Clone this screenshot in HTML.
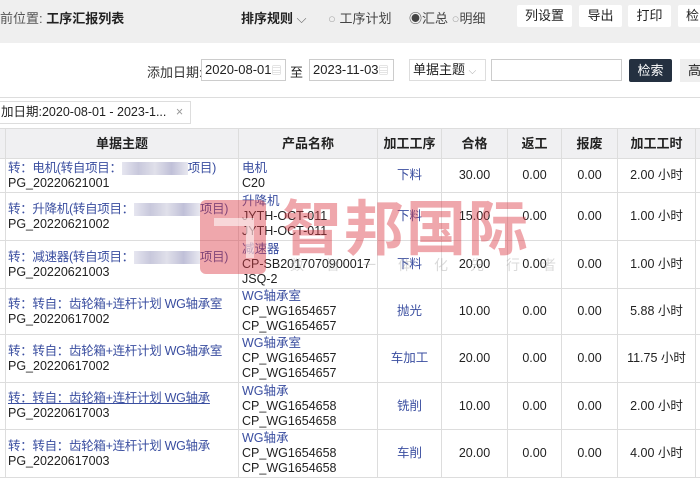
<!DOCTYPE html><html><head><meta charset="utf-8"><style>
*{margin:0;padding:0;box-sizing:border-box}
body{width:700px;height:479px;overflow:hidden;background:#fff;font-family:"Liberation Sans","Noto Sans CJK SC",sans-serif;font-size:13px;color:#222;position:relative}
.a{position:absolute;white-space:nowrap}
.top{position:absolute;left:0;top:0;width:700px;height:43px;background:#efefef}
.btn{position:absolute;top:5px;height:22px;background:#fff;border-radius:2px;font-size:13px;line-height:22px;text-align:center}
.inp{position:absolute;height:22px;border:1px solid #ccc;background:#fff;font-size:13px;line-height:20px;padding-left:3px}
table{position:absolute;left:-2px;top:128px;width:717px;border-collapse:collapse;table-layout:fixed}
td,th{border:1px solid #ddd;font-size:12.5px;line-height:15px;vertical-align:middle;white-space:nowrap;overflow:hidden}
th{background:#f0f0f2;font-weight:bold;height:30px;font-size:13px}
td.c{text-align:center}
.b{color:#3a4ea0}
.z{letter-spacing:-0.3px}
.blur{display:inline-block;width:66px;height:13px;background:linear-gradient(90deg,#e6e6f0,#c8c8dc,#e0e0ea,#c0c0d8,#e8e8f0);vertical-align:middle}
</style></head><body>
<div class="top"></div>
<div class="a" style="left:0;top:8px;font-size:13px;color:#555">前位置: <b style="color:#222">工序汇报列表</b></div>
<div class="a" style="left:241px;top:8px;font-weight:bold">排序规则 <span style="font-weight:normal;color:#666">⌵</span></div>
<div class="a" style="left:328px;top:8px;color:#444"><span style="color:#aaa">○</span> 工序计划</div>
<div class="a" style="left:409px;top:8px;color:#444"><span>◉</span>汇总 <span style="color:#aaa">○</span>明细</div>
<div class="btn" style="left:517px;width:55px">列设置</div>
<div class="btn" style="left:579px;width:43px">导出</div>
<div class="btn" style="left:628px;width:43px">打印</div>
<div class="btn" style="left:678px;width:30px;text-align:left;padding-left:8px">检</div>
<div class="a" style="left:147px;top:62px;color:#333">添加日期:</div>
<div class="inp" style="left:201px;top:59px;width:85px">2020-08-01<span style="color:#bbb;font-size:10px">▤</span></div>
<div class="a" style="left:290px;top:62px">至</div>
<div class="inp" style="left:309px;top:59px;width:85px">2023-11-03<span style="color:#bbb;font-size:10px">▤</span></div>
<div class="inp" style="left:409px;top:59px;width:77px;border-color:#ddd">单据主题 <span style="color:#aaa;font-size:10px">⌵</span></div>
<div class="inp" style="left:491px;top:59px;width:131px"></div>
<div class="a" style="left:629px;top:59px;width:43px;height:23px;background:#243040;color:#fff;border-radius:2px;text-align:center;line-height:23px">检索</div>
<div class="a" style="left:680px;top:59px;width:30px;height:23px;background:#eee;padding-left:8px;line-height:23px">高</div>
<div style="position:absolute;left:0;top:97px;width:700px;border-top:1px solid #ddd"></div>
<div class="a" style="left:-2px;top:101px;width:193px;height:23px;border:1px solid #ddd;line-height:21px;padding-left:2px;font-size:12.5px">加日期:2020-08-01 - 2023-1... <span style="color:#999;margin-left:6px">×</span></div>
<table>
<colgroup><col style="width:7px"><col style="width:233px"><col style="width:139px"><col style="width:64px"><col style="width:66px"><col style="width:54px"><col style="width:56px"><col style="width:78px"><col style="width:20px"></colgroup>
<tr><th></th><th>单据主题</th><th>产品名称</th><th>加工工序</th><th>合格</th><th>返工</th><th>报废</th><th>加工工时</th><th></th></tr>
<tr style="height:34px"><td></td><td style="padding-left:2px"><span class="b z">转：电机(转自项目：<span class="blur"></span>项目)</span><br>PG_20220621001</td><td style="padding-left:3px"><span class="b">电机</span><br>C20</td><td class="c b">下料</td><td class="c">30.00</td><td class="c">0.00</td><td class="c">0.00</td><td class="c">2.00 小时</td><td></td></tr>
<tr style="height:48px"><td></td><td style="padding-left:2px"><span class="b z">转：升降机(转自项目：<span class="blur"></span>项目)</span><br>PG_20220621002</td><td style="padding-left:3px"><span class="b">升降机</span><br>JYTH-OCT-011<br>JYTH-OCT-011</td><td class="c b">下料</td><td class="c">15.00</td><td class="c">0.00</td><td class="c">0.00</td><td class="c">1.00 小时</td><td></td></tr>
<tr style="height:48px"><td></td><td style="padding-left:2px"><span class="b z">转：减速器(转自项目：<span class="blur"></span>项目)</span><br>PG_20220621003</td><td style="padding-left:3px"><span class="b">减速器</span><br>CP-SB2017070900017<br>JSQ-2</td><td class="c b">下料</td><td class="c">20.00</td><td class="c">0.00</td><td class="c">0.00</td><td class="c">1.00 小时</td><td></td></tr>
<tr style="height:46px"><td></td><td style="padding-left:2px"><span class="b z">转：转自：齿轮箱+连杆计划 WG轴承室</span><br>PG_20220617002</td><td style="padding-left:3px"><span class="b">WG轴承室</span><br>CP_WG1654657<br>CP_WG1654657</td><td class="c b">抛光</td><td class="c">10.00</td><td class="c">0.00</td><td class="c">0.00</td><td class="c">5.88 小时</td><td></td></tr>
<tr style="height:48px"><td></td><td style="padding-left:2px"><span class="b z">转：转自：齿轮箱+连杆计划 WG轴承室</span><br>PG_20220617002</td><td style="padding-left:3px"><span class="b">WG轴承室</span><br>CP_WG1654657<br>CP_WG1654657</td><td class="c b">车加工</td><td class="c">20.00</td><td class="c">0.00</td><td class="c">0.00</td><td class="c">11.75 小时</td><td></td></tr>
<tr style="height:47px"><td></td><td style="padding-left:2px"><span class="b z" style="text-decoration:underline">转：转自：齿轮箱+连杆计划 WG轴承</span><br>PG_20220617003</td><td style="padding-left:3px"><span class="b">WG轴承</span><br>CP_WG1654658<br>CP_WG1654658</td><td class="c b">铣削</td><td class="c">10.00</td><td class="c">0.00</td><td class="c">0.00</td><td class="c">2.00 小时</td><td></td></tr>
<tr style="height:48px"><td></td><td style="padding-left:2px"><span class="b z">转：转自：齿轮箱+连杆计划 WG轴承</span><br>PG_20220617003</td><td style="padding-left:3px"><span class="b">WG轴承</span><br>CP_WG1654658<br>CP_WG1654658</td><td class="c b">车削</td><td class="c">20.00</td><td class="c">0.00</td><td class="c">0.00</td><td class="c">4.00 小时</td><td></td></tr>
</table>
<div class="a" style="left:200px;top:200px;width:66px;height:74px;background:rgba(220,60,70,.45);border-radius:6px"></div>
<div class="a" style="left:214px;top:218px;width:40px;height:40px;border:8px solid rgba(255,255,255,.55);border-left:none;border-bottom:none"></div>
<div class="a" style="left:282px;top:198px;font-size:60px;font-weight:bold;color:rgba(220,60,70,.45);letter-spacing:2px;line-height:64px">智邦国际</div>
<div class="a" style="left:290px;top:255px;font-size:14px;color:rgba(150,150,150,.35);letter-spacing:22px">数智一体化先行者</div>
</body></html>
